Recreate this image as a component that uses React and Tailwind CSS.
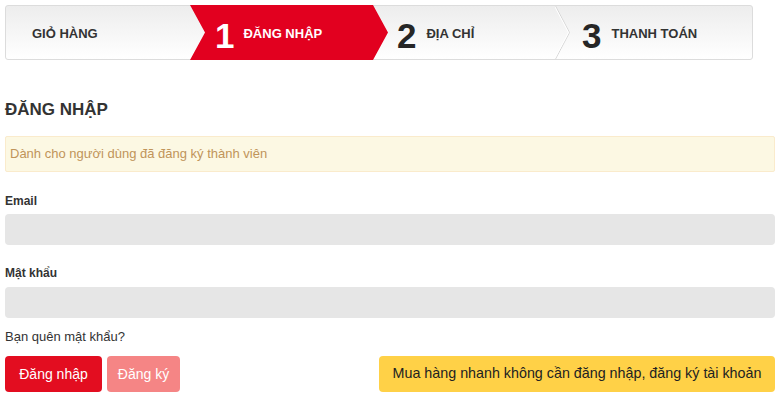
export default function App() {
  return (
    <div className="min-h-screen bg-white px-[5px] pt-[5px] font-['Liberation_Sans',Arial,sans-serif] text-[#333]">
      {/* checkout steps */}
      <div className="flex h-[55px] w-[748px] rounded-[3px] border border-[#dcdcdc] bg-gradient-to-b from-[#ededed] to-white">
        <div className="flex w-[184px] items-center pl-[26px] pt-[3px] text-[13px] font-bold text-[#333]">
          GIỎ HÀNG
        </div>
        <div className="-my-px flex w-[198px] items-center bg-[#e2001f] pl-[25px] pt-[3px] text-white [clip-path:polygon(0_0,183px_0,100%_50%,183px_100%,0_100%,15px_50%)]">
          <span className="mt-[2px] text-[35px] font-bold leading-none">1</span>
          <span className="ml-[9px] text-[13px] font-bold">ĐĂNG NHẬP</span>
        </div>
        <div className="flex w-[167px] items-center pl-[9px] pt-[3px]">
          <span className="mt-[2px] text-[35px] font-bold leading-none text-[#262626]">2</span>
          <span className="ml-[10px] text-[13px] font-bold">ĐỊA CHỈ</span>
        </div>
        <svg width="15" height="53" viewBox="0 0 15 53" className="shrink-0">
          <polyline points="0.5,0 14.5,26.5 0.5,53" fill="none" stroke="#d6d6d6" strokeWidth="1" />
          <polyline points="-0.5,0 13.5,26.5 -0.5,53" fill="none" stroke="#ffffff" strokeWidth="1" />
        </svg>
        <div className="flex flex-1 items-center pl-[12px] pt-[3px]">
          <span className="mt-[2px] text-[35px] font-bold leading-none text-[#262626]">3</span>
          <span className="ml-[10px] text-[13px] font-bold">THANH TOÁN</span>
        </div>
      </div>

      <h2 className="mt-[40px] text-[17px] font-bold leading-5 text-[#333]">ĐĂNG NHẬP</h2>

      <div className="mt-[16px] flex h-[36px] items-center rounded-[2px] border border-[#faebcc] bg-[#fcf8e3] px-[4px] text-[13px] text-[#c0945a]">
        Dành cho người dùng đã đăng ký thành viên
      </div>

      <label className="mt-[21px] block text-[12px] font-bold leading-4">Email</label>
      <div className="mt-[5px] h-[31px] rounded-[4px] bg-[#e6e6e6]" />

      <label className="mt-[20px] block text-[12px] font-bold leading-4">Mật khẩu</label>
      <div className="mt-[6px] h-[31px] rounded-[4px] bg-[#e6e6e6]" />

      <p className="mt-[11px] text-[13px] leading-4 text-[#333]">Bạn quên mật khẩu?</p>

      <div className="mt-[11px] flex items-center gap-[5px]">
        <button className="h-[36px] w-[97px] rounded-[4px] bg-[#e30d20] text-[14px] text-white">Đăng nhập</button>
        <button className="h-[36px] w-[73px] rounded-[4px] bg-[#f58585] text-[14px] text-white">Đăng ký</button>
        <button className="ml-auto h-[36px] w-[396px] rounded-[4px] bg-[#ffd147] text-[14.3px] text-[#222]">
          Mua hàng nhanh không cần đăng nhập, đăng ký tài khoản
        </button>
      </div>
    </div>
  );
}
